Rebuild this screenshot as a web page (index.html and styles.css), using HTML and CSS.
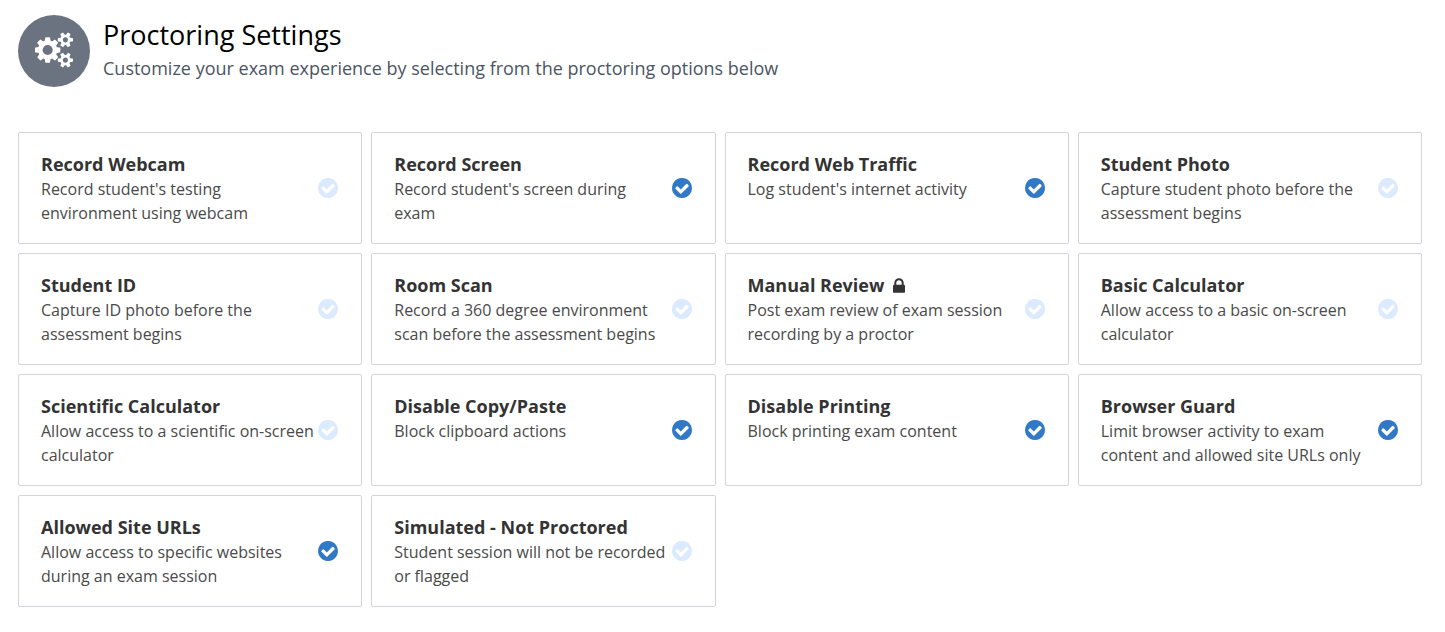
FILE: index.html
```html
<!DOCTYPE html>
<html lang="en">
<head>
    <meta charset="UTF-8">
    <meta name="viewport" content="width=device-width, initial-scale=1.0">
    <title>Proctoring Settings</title>
    <link rel="stylesheet" href="styles.css">
</head>
<body>
    <svg class="icon-defs" aria-hidden="true">
        <symbol id="icon-check" viewBox="128 128 1536 1536">
            <path d="M1412 734q0-28-18-46l-91-90q-19-19-45-19t-45 19l-408 407-226-226q-19-19-45-19t-45 19l-91 90q-18 18-18 46 0 27 18 45l362 362q19 19 45 19 27 0 46-19l543-543q18-18 18-45zm252 162q0 209-103 385.500t-279.500 279.500-385.500 103-385.500-103-279.500-279.500-103-385.500 103-385.500 279.500-279.500 385.500-103 385.500 103 279.500 279.500 103 385.500z"/>
        </symbol>
    </svg>

    <div class="container">
        <header class="header">
            <div class="header-icon">
                <svg viewBox="0 0 1920 1792" aria-hidden="true">
                    <path d="M896 896q0-106-75-181t-181-75-181 75-75 181 75 181 181 75 181-75 75-181zm768 512q0-52-38-90t-90-38-90 38-38 90q0 53 37.500 90.500t90.500 37.500 90.500-37.500 37.500-90.500zm0-1024q0-52-38-90t-90-38-90 38-38 90q0 53 37.500 90.500t90.500 37.500 90.500-37.500 37.500-90.500zm-384 421v185q0 10-7 19.500t-16 10.500l-155 24q-11 35-32 76 34 48 90 115 7 11 7 20 0 12-7 19-23 30-82.500 89.500t-78.500 59.500q-11 0-21-7l-115-90q-37 19-77 31-11 108-23 155-7 24-30 24h-186q-11 0-20-7.500t-10-17.500l-23-153q-34-10-75-31l-118 89q-7 7-20 7-11 0-21-8-144-133-144-160 0-9 7-19 10-14 41-53t47-61q-23-44-35-82l-152-24q-10-1-17-9.500t-7-19.500v-185q0-10 7-19.500t16-10.500l155-24q11-35 32-76-34-48-90-115-7-11-7-20 0-12 7-20 22-30 82-89t79-59q11 0 21 7l115 90q34-18 77-32 11-108 23-154 7-24 30-24h186q11 0 20 7.500t10 17.500l23 153q34 10 75 31l118-89q8-7 20-7 11 0 21 8 144 133 144 160 0 8-7 19-12 16-42 54t-45 60q23 48 34 82l152 23q10 2 17 10.500t7 19.500zm640 533v140q0 16-149 31-12 27-30 52 51 113 51 138 0 4-4 7-122 71-124 71-8 0-46-47t-52-68q-20 2-30 2t-30-2q-14 21-52 68t-46 47q-2 0-124-71-4-3-4-7 0-25 51-138-18-25-30-52-149-15-149-31v-140q0-16 149-31 13-29 30-52-51-113-51-138 0-4 4-7 4-2 35-20t59-34 30-16q8 0 46 46.500t52 67.500q20-2 30-2t30 2q51-71 92-112l6-2q4 0 124 70 4 3 4 7 0 25-51 138 17 23 30 52 149 15 149 31zm0-1024v140q0 16-149 31-12 27-30 52 51 113 51 138 0 4-4 7-122 71-124 71-8 0-46-47t-52-68q-20 2-30 2t-30-2q-14 21-52 68t-46 47q-2 0-124-71-4-3-4-7 0-25 51-138-18-25-30-52-149-15-149-31v-140q0-16 149-31 13-29 30-52-51-113-51-138 0-4 4-7 4-2 35-20t59-34 30-16q8 0 46 46.500t52 67.500q20-2 30-2t30 2q51-71 92-112l6-2q4 0 124 70 4 3 4 7 0 25-51 138 17 23 30 52 149 15 149 31z"/>
                </svg>
            </div>
            <div class="header-text">
                <h1>Proctoring Settings</h1>
                <p>Customize your exam experience by selecting from the proctoring options below</p>
            </div>
        </header>

        <main class="options">
            <label class="option">
                <span class="option-text">
                    <span class="option-title">Record Webcam</span>
                    <span class="option-desc">Record student's testing environment using webcam</span>
                </span>
                <span class="check"><input type="checkbox"><svg aria-hidden="true"><use href="#icon-check"/></svg></span>
            </label>
            <label class="option">
                <span class="option-text">
                    <span class="option-title">Record Screen</span>
                    <span class="option-desc">Record student's screen during exam</span>
                </span>
                <span class="check"><input type="checkbox" checked><svg aria-hidden="true"><use href="#icon-check"/></svg></span>
            </label>
            <label class="option">
                <span class="option-text">
                    <span class="option-title">Record Web Traffic</span>
                    <span class="option-desc">Log student's internet activity</span>
                </span>
                <span class="check"><input type="checkbox" checked><svg aria-hidden="true"><use href="#icon-check"/></svg></span>
            </label>
            <label class="option">
                <span class="option-text">
                    <span class="option-title">Student Photo</span>
                    <span class="option-desc">Capture student photo before the assessment begins</span>
                </span>
                <span class="check"><input type="checkbox"><svg aria-hidden="true"><use href="#icon-check"/></svg></span>
            </label>
            <label class="option">
                <span class="option-text">
                    <span class="option-title">Student ID</span>
                    <span class="option-desc">Capture ID photo before the assessment begins</span>
                </span>
                <span class="check"><input type="checkbox"><svg aria-hidden="true"><use href="#icon-check"/></svg></span>
            </label>
            <label class="option">
                <span class="option-text">
                    <span class="option-title">Room Scan</span>
                    <span class="option-desc">Record a 360 degree environment scan before the assessment begins</span>
                </span>
                <span class="check"><input type="checkbox"><svg aria-hidden="true"><use href="#icon-check"/></svg></span>
            </label>
            <label class="option">
                <span class="option-text">
                    <span class="option-title">Manual Review
                        <svg class="lock" viewBox="320 128 1152 1408" aria-hidden="true">
                            <path d="M640 768h512v-192q0-106-75-181t-181-75-181 75-75 181v192zm832 96v576q0 40-28 68t-68 28h-960q-40 0-68-28t-28-68v-576q0-40 28-68t68-28h32v-192q0-184 132-316t316-132 316 132 132 316v192h32q40 0 68 28t28 68z"/>
                        </svg>
                    </span>
                    <span class="option-desc">Post exam review of exam session recording by a proctor</span>
                </span>
                <span class="check"><input type="checkbox"><svg aria-hidden="true"><use href="#icon-check"/></svg></span>
            </label>
            <label class="option">
                <span class="option-text">
                    <span class="option-title">Basic Calculator</span>
                    <span class="option-desc">Allow access to a basic on-screen calculator</span>
                </span>
                <span class="check"><input type="checkbox"><svg aria-hidden="true"><use href="#icon-check"/></svg></span>
            </label>
            <label class="option">
                <span class="option-text">
                    <span class="option-title">Scientific Calculator</span>
                    <span class="option-desc">Allow access to a scientific on-screen calculator</span>
                </span>
                <span class="check"><input type="checkbox"><svg aria-hidden="true"><use href="#icon-check"/></svg></span>
            </label>
            <label class="option">
                <span class="option-text">
                    <span class="option-title">Disable Copy/Paste</span>
                    <span class="option-desc">Block clipboard actions</span>
                </span>
                <span class="check"><input type="checkbox" checked><svg aria-hidden="true"><use href="#icon-check"/></svg></span>
            </label>
            <label class="option">
                <span class="option-text">
                    <span class="option-title">Disable Printing</span>
                    <span class="option-desc">Block printing exam content</span>
                </span>
                <span class="check"><input type="checkbox" checked><svg aria-hidden="true"><use href="#icon-check"/></svg></span>
            </label>
            <label class="option">
                <span class="option-text">
                    <span class="option-title">Browser Guard</span>
                    <span class="option-desc">Limit browser activity to exam content and allowed site URLs only</span>
                </span>
                <span class="check"><input type="checkbox" checked><svg aria-hidden="true"><use href="#icon-check"/></svg></span>
            </label>
            <label class="option">
                <span class="option-text">
                    <span class="option-title">Allowed Site URLs</span>
                    <span class="option-desc">Allow access to specific websites during an exam session</span>
                </span>
                <span class="check"><input type="checkbox" checked><svg aria-hidden="true"><use href="#icon-check"/></svg></span>
            </label>
            <label class="option">
                <span class="option-text">
                    <span class="option-title">Simulated - Not Proctored</span>
                    <span class="option-desc">Student session will not be recorded or flagged</span>
                </span>
                <span class="check"><input type="checkbox"><svg aria-hidden="true"><use href="#icon-check"/></svg></span>
            </label>
        </main>
    </div>
</body>
</html>
```
FILE: styles.css
```css
* {
    margin: 0;
    padding: 0;
    box-sizing: border-box;
}

body {
    background-color: #ffffff;
    color: #333333;
    font-family: 'Open Sans', 'Noto Sans', sans-serif;
}

.icon-defs {
    display: none;
}

.container {
    padding: 15px 23px 15px 18px;
}

.header {
    display: flex;
    align-items: flex-start;
    gap: 13px;
    margin-bottom: 45px;
}

.header-icon {
    display: flex;
    align-items: center;
    justify-content: center;
    flex: none;
    width: 72px;
    height: 72px;
    border-radius: 50%;
    background: #6b7280;
}

.header-icon svg {
    width: 38px;
    height: 36px;
    margin-bottom: 2px;
    fill: #ffffff;
}

.header-text {
    padding-top: 2px;
}

h1 {
    font-size: 27px;
    font-weight: 400;
    line-height: 36px;
    color: #000000;
}

.header-text p {
    font-size: 18px;
    line-height: 30px;
    color: #4b5563;
}

.options {
    display: grid;
    grid-template-columns: repeat(4, 1fr);
    gap: 9px;
}

.option {
    display: flex;
    align-items: center;
    justify-content: space-between;
    min-height: 112px;
    padding: 18px 22px;
    border: 1px solid #d1d5db;
    border-radius: 2px;
    cursor: pointer;
}

.option-text {
    align-self: flex-start;
}

.option-title {
    display: block;
    font-size: 18px;
    font-weight: 700;
    line-height: 26px;
}

.option-desc {
    display: block;
    font-size: 16px;
    line-height: 24px;
    color: #4a4a4a;
}

.lock {
    width: 12px;
    height: 15px;
    margin-left: 4px;
    vertical-align: -1px;
    fill: currentColor;
}

/* the tick is stacked over the real checkbox */
.check {
    display: grid;
    flex: none;
    width: 22px;
    height: 22px;
    place-items: center;
}

.check input,
.check svg {
    grid-area: 1 / 1;
    width: 20px;
    height: 20px;
}

.check input {
    appearance: none;
    cursor: pointer;
}

.check svg {
    fill: #dbeafe;
    pointer-events: none;
}

.check input:checked + svg {
    fill: #3178c6;
}

.check input:focus-visible {
    outline: 2px solid #93c5fd;
    border-radius: 50%;
}
```
